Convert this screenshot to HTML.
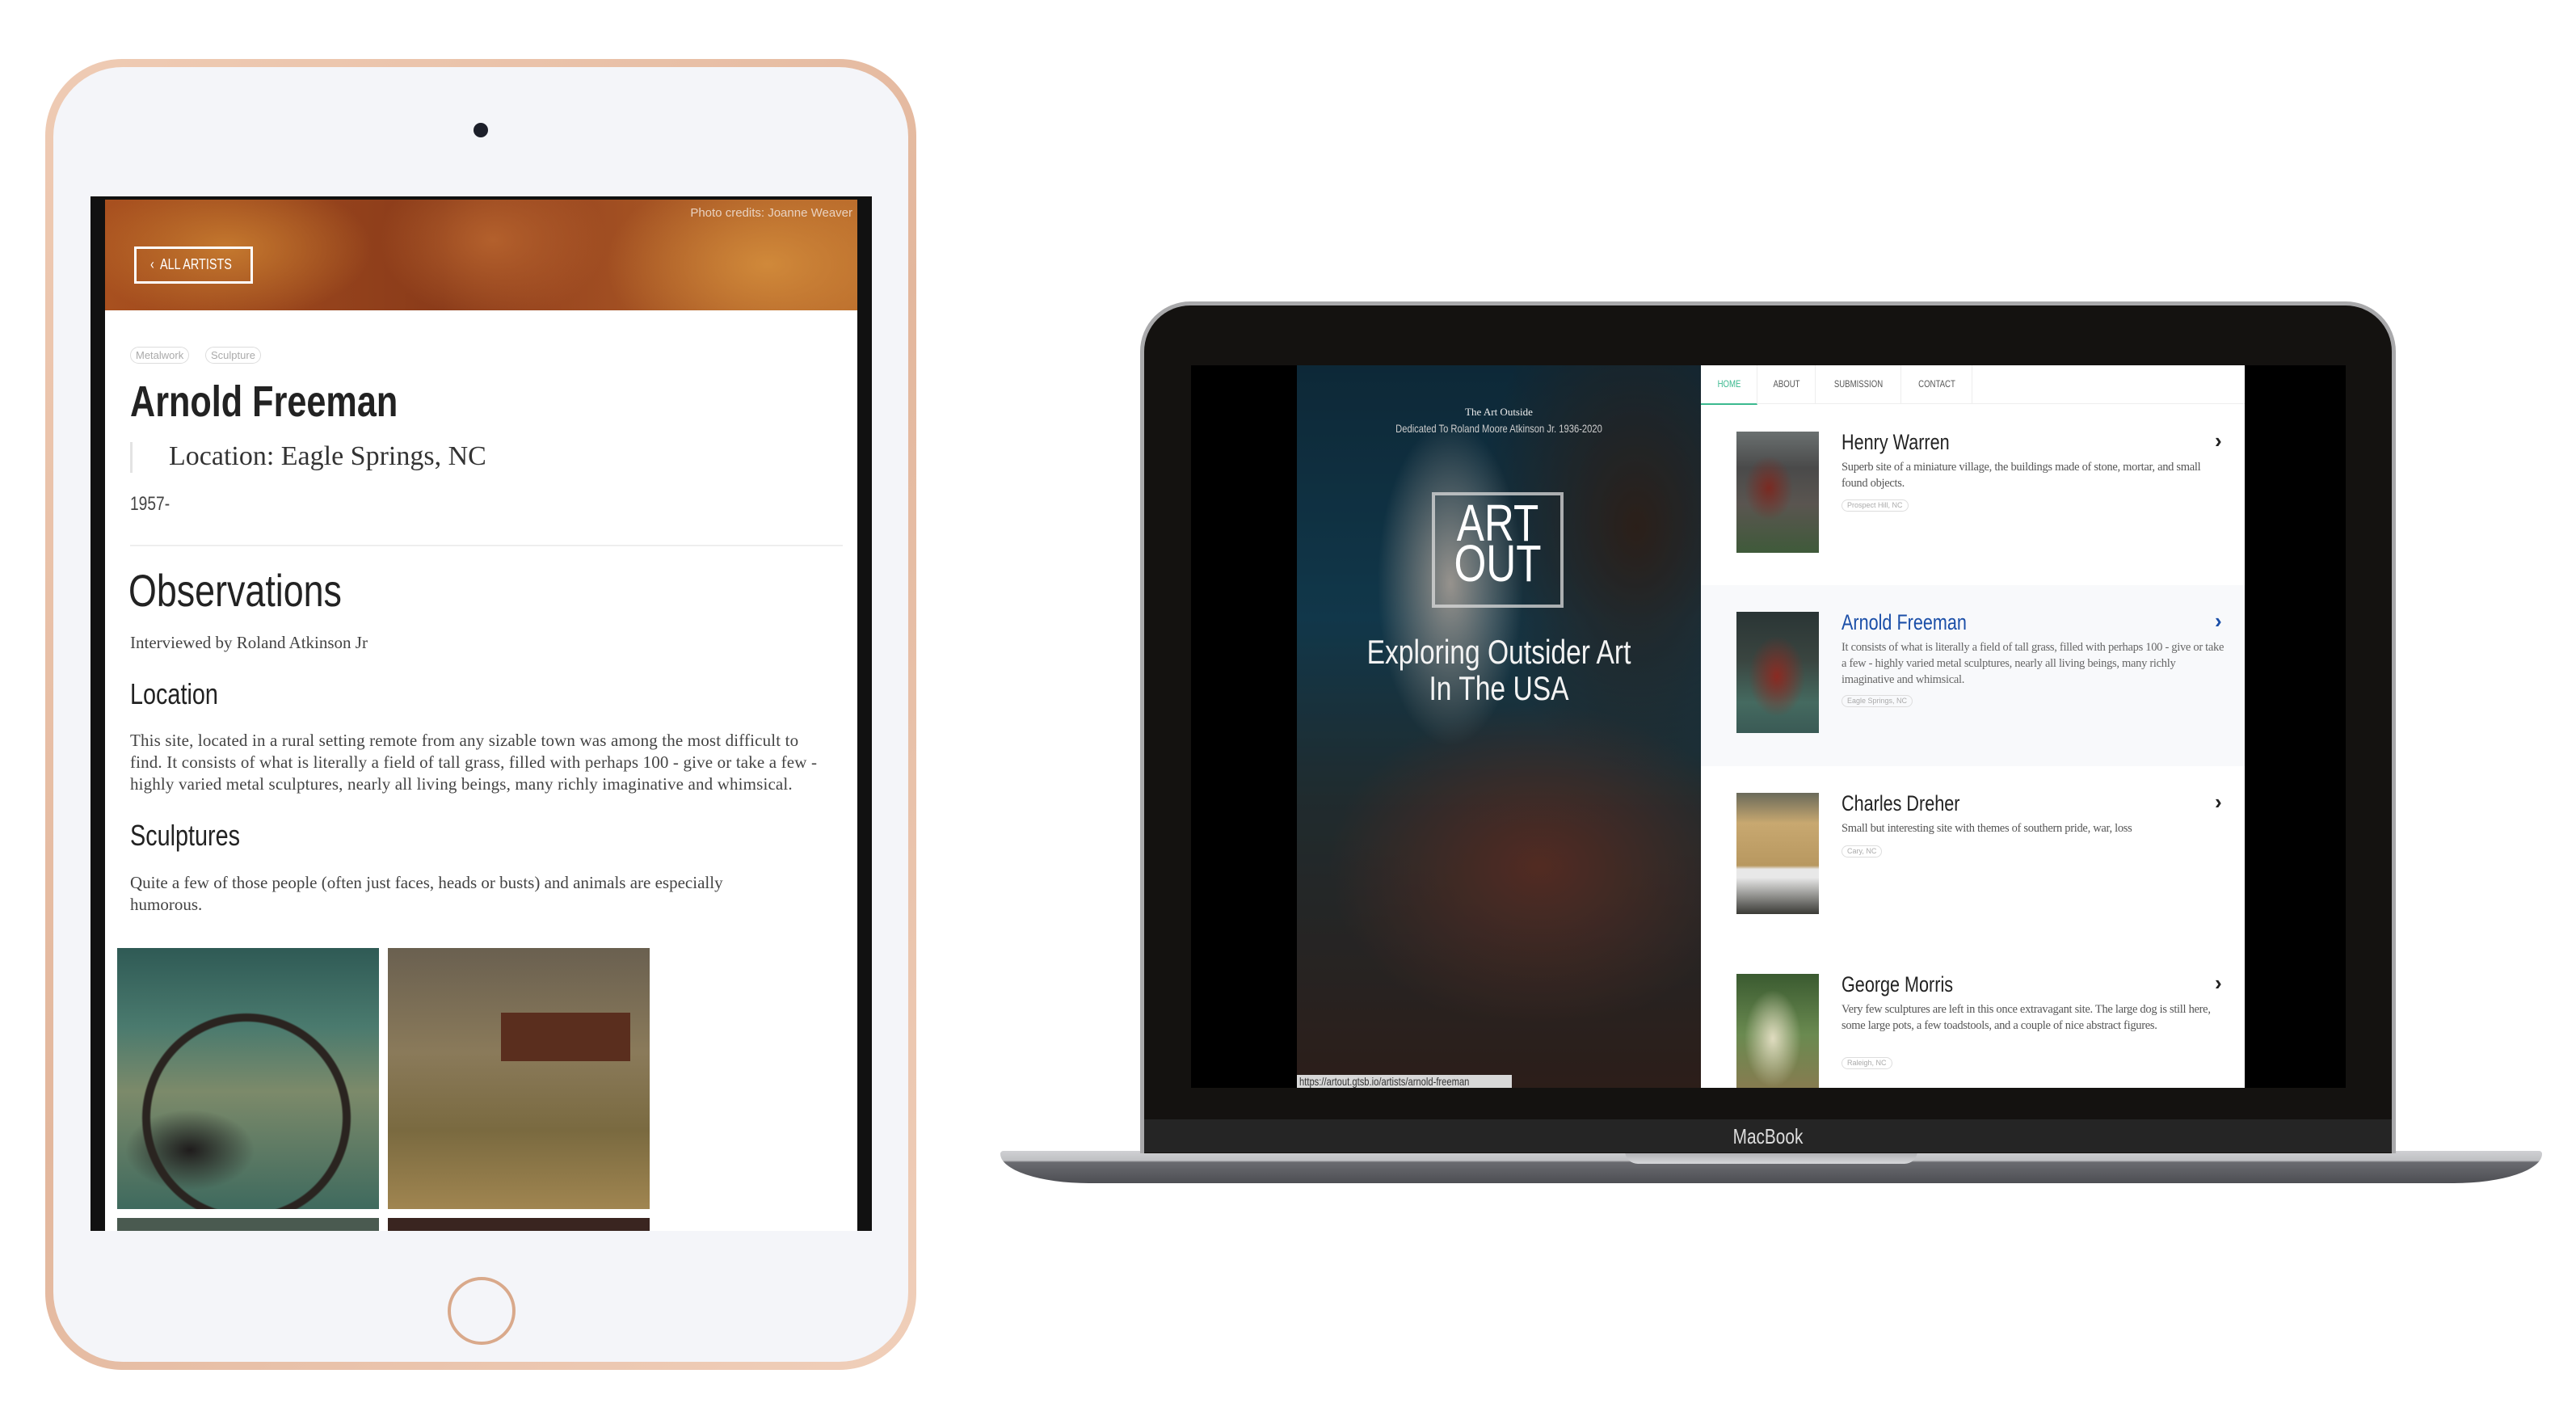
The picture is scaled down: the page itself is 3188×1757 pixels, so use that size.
<!DOCTYPE html>
<html><head><meta charset="utf-8"><style>
*{margin:0;padding:0;box-sizing:border-box}
body{width:3188px;height:1757px;background:#fff;position:relative;overflow:hidden;font-family:"Liberation Sans",sans-serif}
.a{position:absolute;white-space:nowrap}
.w{white-space:normal}
.n{transform:scaleX(.8);transform-origin:left top}
.nc{transform:scaleX(.8);transform-origin:center top}
.ser{font-family:"Liberation Serif",serif}
.pill{position:absolute;white-space:nowrap;border:1.5px solid #ddd;border-radius:12px;color:#aaa;padding:0 6px}
</style></head><body>

<!-- iPad -->
<div class="a" style="left:56px;top:73px;width:1078px;height:1622px;border-radius:95px;background:linear-gradient(135deg,#efcbb4,#e3b79d 50%,#f0cfba);"></div>
<div class="a" style="left:66px;top:83px;width:1058px;height:1602px;border-radius:86px;background:#f4f5f9;"></div>
<div class="a" style="left:586px;top:152px;width:18px;height:18px;border-radius:50%;background:#1c1f2a;"></div>
<div class="a" style="left:554px;top:1580px;width:84px;height:84px;border-radius:50%;border:4px solid #d9a98b;"></div>

<div class="a" style="left:112px;top:243px;width:967px;height:1280px;background:#111;"></div>
<div class="a" style="left:130px;top:247px;width:931px;height:1276px;background:#fff;overflow:hidden;">
  <div class="a" style="left:0;top:0;width:931px;height:137px;background:radial-gradient(ellipse 180px 90px at 150px 60px,#c4782e,transparent),radial-gradient(ellipse 200px 120px at 820px 80px,#d0893a,transparent),radial-gradient(ellipse 140px 100px at 480px 50px,#b3602c,transparent),linear-gradient(90deg,#a8501f,#8a3b1a 45%,#9b4820 60%,#b8692a);"></div>
  <div class="a" style="right:6px;top:8px;font-size:15px;color:#e9d2c0;">Photo credits: Joanne Weaver</div>
  <div class="a" style="left:36px;top:58px;width:147px;height:46px;border:3px solid #fff;"></div>
  <div class="a n" style="left:56px;top:70px;color:#fff;font-size:18px;">‹&nbsp; ALL ARTISTS</div>

  <div class="pill" style="left:31px;top:182px;font-size:13px;line-height:19px;">Metalwork</div>
  <div class="pill" style="left:124px;top:182px;font-size:13px;line-height:19px;">Sculpture</div>
  <div class="a n" style="left:31px;top:220px;font-size:54px;font-weight:bold;color:#222;line-height:60px;">Arnold Freeman</div>
  <div class="a" style="left:31px;top:300px;width:3px;height:38px;background:#e3e3e3;"></div>
  <div class="a ser" style="left:79px;top:298px;font-size:34px;color:#333;line-height:40px;">Location: Eagle Springs, NC</div>
  <div class="a n" style="left:31px;top:363px;font-size:24px;color:#444;">1957-</div>
  <div class="a" style="left:31px;top:427px;width:882px;height:2px;background:#eee;"></div>
  <div class="a n" style="left:29px;top:454px;font-size:56px;color:#222;line-height:60px;">Observations</div>
  <div class="a ser" style="left:31px;top:536px;font-size:21px;color:#444;">Interviewed by Roland Atkinson Jr</div>
  <div class="a n" style="left:31px;top:592px;font-size:36px;color:#222;line-height:40px;">Location</div>
  <div class="a ser w" style="left:31px;top:656px;width:868px;font-size:21px;color:#444;line-height:27px;letter-spacing:.15px;">This site, located in a rural setting remote from any sizable town was among the most difficult to find. It consists of what is literally a field of tall grass, filled with perhaps 100 - give or take a few - highly varied metal sculptures, nearly all living beings, many richly imaginative and whimsical.</div>
  <div class="a n" style="left:31px;top:767px;font-size:36px;color:#222;line-height:40px;">Sculptures</div>
  <div class="a ser w" style="left:31px;top:832px;width:810px;font-size:21px;color:#444;line-height:27px;">Quite a few of those people (often just faces, heads or busts) and animals are especially humorous.</div>
  <div class="a" style="left:15px;top:926px;width:324px;height:323px;background:radial-gradient(circle 130px at 160px 210px,transparent 118px,#2a2420 120px,#2a2420 128px,transparent 130px),radial-gradient(ellipse 80px 50px at 90px 250px,#1f1c1c,transparent),linear-gradient(180deg,#2f5a55,#4a7a6e 30%,#7c8a6a 55%,#3f6a5e);"></div>
  <div class="a" style="left:350px;top:926px;width:324px;height:323px;background:linear-gradient(90deg,transparent 140px,#5a2e1e 140px,#5a2e1e 300px,transparent 300px) 0 80px/100% 60px no-repeat,linear-gradient(180deg,#6a6050,#8a7a5a 40%,#7a6a40 70%,#a08550);"></div>
  <div class="a" style="left:15px;top:1260px;width:324px;height:20px;background:#4a5a50;"></div>
  <div class="a" style="left:350px;top:1260px;width:324px;height:20px;background:#3a2520;"></div>
</div>

<!-- MacBook -->
<div class="a" style="left:1238px;top:1424px;width:1908px;height:40px;border-radius:4px 4px 120px 120px/4px 4px 40px 40px;background:linear-gradient(180deg,#cfd0d3 0,#bfc0c3 12px,#6a6b70 14px,#4d4e53 100%);"></div>
<div class="a" style="left:2011px;top:1424px;width:362px;height:16px;border-radius:0 0 30px 30px;background:linear-gradient(180deg,#a9aaad,#d6d7da);"></div>
<div class="a" style="left:1411px;top:373px;width:1554px;height:1054px;border-radius:62px 62px 0 0;background:#a9a9ab;"></div>
<div class="a" style="left:1416px;top:378px;width:1544px;height:1049px;border-radius:57px 57px 0 0;background:#141210;"></div>
<div class="a" style="left:1416px;top:1385px;width:1544px;height:41px;background:#252525;"></div>
<div class="a nc" style="left:2088px;top:1391px;width:200px;text-align:center;font-size:26px;color:#ddd;">MacBook</div>
<div class="a" style="left:1474px;top:452px;width:1429px;height:894px;background:#000;"></div>

<!-- hero -->
<div class="a" style="left:1605px;top:452px;width:500px;height:894px;overflow:hidden;background:radial-gradient(ellipse 90px 200px at 190px 270px,#c9c4bd,transparent),radial-gradient(ellipse 260px 200px at 300px 620px,#6e3a2e,transparent),radial-gradient(ellipse 200px 300px at 420px 200px,#3a2a22,transparent),linear-gradient(180deg,#12364a 0,#174a63 35%,#2b3a3e 60%,#3b2822 100%);">
  <div class="a" style="left:0;top:0;width:100%;height:100%;background:rgba(0,0,0,.25)"></div>
  <div class="a ser" style="left:0;top:50px;width:100%;text-align:center;font-size:13px;color:#eee;">The Art Outside</div>
  <div class="a nc" style="left:0;top:70px;width:100%;text-align:center;font-size:14px;color:#ccc;">Dedicated To Roland Moore Atkinson Jr. 1936-2020</div>
  <div class="a" style="left:167px;top:157px;width:163px;height:143px;border:4px solid rgba(220,220,220,.75);"></div>
  <div class="a nc" style="left:167px;top:170px;width:163px;text-align:center;font-size:64px;color:#fff;line-height:50px;">ART<br>OUT</div>
  <div class="a nc" style="left:0;top:332px;width:100%;text-align:center;font-size:42px;color:#f3f3f3;line-height:45px;">Exploring Outsider Art<br>In The USA</div>
  <div class="a" style="left:0;bottom:0;width:266px;height:16px;background:#d8d8d8;"></div>
  <div class="a n" style="left:3px;bottom:0;color:#333;font-size:14px;line-height:16px;">https://artout.gtsb.io/artists/arnold-freeman</div>
</div>

<!-- panel -->
<div class="a" style="left:2105px;top:452px;width:673px;height:894px;background:#fff;overflow:hidden;">
  <div class="a" style="left:0;top:0;width:100%;height:48px;border-bottom:1px solid #eee;"></div>
  <div class="a" style="left:0;top:0;width:70px;height:49px;border-bottom:2px solid #3bb98f;border-right:1px solid #eee;"></div>
  <div class="a nc" style="left:0;top:16px;width:70px;color:#3bb98f;font-size:12px;text-align:center;">HOME</div>
  <div class="a" style="left:70px;top:0;width:72px;height:48px;border-right:1px solid #eee;"></div>
  <div class="a nc" style="left:70px;top:16px;width:72px;color:#555;font-size:12px;text-align:center;">ABOUT</div>
  <div class="a" style="left:142px;top:0;width:106px;height:48px;border-right:1px solid #eee;"></div>
  <div class="a nc" style="left:142px;top:16px;width:106px;color:#555;font-size:12px;text-align:center;">SUBMISSION</div>
  <div class="a" style="left:248px;top:0;width:88px;height:48px;border-right:1px solid #eee;"></div>
  <div class="a nc" style="left:248px;top:16px;width:88px;color:#555;font-size:12px;text-align:center;">CONTACT</div>

  <div class="a" style="left:0;top:272px;width:100%;height:224px;background:#f8f9fb;"></div>

  <div class="a" style="left:44px;top:82px;width:102px;height:150px;background:radial-gradient(ellipse 30px 40px at 40px 70px,#7a2a22,transparent),linear-gradient(180deg,#6a7070,#4a4a4a 30%,#5a5550 60%,#3f5a3a);"></div>
  <div class="a n" style="left:174px;top:80px;font-size:27px;color:#222;">Henry Warren</div>
  <div class="a" style="left:636px;top:78px;font-size:26px;color:#222;font-weight:bold;">›</div>
  <div class="a ser w" style="left:174px;top:116px;width:465px;font-size:14.5px;color:#555;line-height:20px;letter-spacing:-.3px;">Superb site of a miniature village, the buildings made of stone, mortar, and small found objects.</div>
  <div class="pill" style="left:174px;top:166px;font-size:9px;line-height:13px;">Prospect Hill, NC</div>

  <div class="a" style="left:44px;top:305px;width:102px;height:150px;background:radial-gradient(ellipse 35px 50px at 50px 80px,#8a2a22,transparent),linear-gradient(180deg,#2a3535,#3a4540 40%,#456a60 75%,#3a5a55);"></div>
  <div class="a n" style="left:174px;top:303px;font-size:27px;color:#1b4fa8;">Arnold Freeman</div>
  <div class="a" style="left:636px;top:301px;font-size:26px;color:#1b4fa8;font-weight:bold;">›</div>
  <div class="a ser w" style="left:174px;top:339px;width:475px;font-size:14.5px;color:#666;line-height:20px;letter-spacing:-.3px;">It consists of what is literally a field of tall grass, filled with perhaps 100 - give or take a few - highly varied metal sculptures, nearly all living beings, many richly imaginative and whimsical.</div>
  <div class="pill" style="left:174px;top:408px;font-size:9px;line-height:13px;">Eagle Springs, NC</div>

  <div class="a" style="left:44px;top:529px;width:102px;height:150px;background:linear-gradient(180deg,#6a6a5a,#c8a870 25%,#b89860 60%,#e8e8e8 63%,#e8e8e8 70%,#3a3a35);"></div>
  <div class="a n" style="left:174px;top:527px;font-size:27px;color:#222;">Charles Dreher</div>
  <div class="a" style="left:636px;top:525px;font-size:26px;color:#222;font-weight:bold;">›</div>
  <div class="a ser w" style="left:174px;top:563px;width:465px;font-size:14.5px;color:#555;line-height:20px;letter-spacing:-.3px;">Small but interesting site with themes of southern pride, war, loss</div>
  <div class="pill" style="left:174px;top:594px;font-size:9px;line-height:13px;">Cary, NC</div>

  <div class="a" style="left:44px;top:753px;width:102px;height:150px;background:radial-gradient(ellipse 35px 60px at 45px 80px,#e0dcc0,transparent),linear-gradient(180deg,#3a5a30,#6a8a50 50%,#8a7a50);"></div>
  <div class="a n" style="left:174px;top:751px;font-size:27px;color:#222;">George Morris</div>
  <div class="a" style="left:636px;top:749px;font-size:26px;color:#222;font-weight:bold;">›</div>
  <div class="a ser w" style="left:174px;top:787px;width:475px;font-size:14.5px;color:#555;line-height:20px;letter-spacing:-.3px;">Very few sculptures are left in this once extravagant site. The large dog is still here, some large pots, a few toadstools, and a couple of nice abstract figures.</div>
  <div class="pill" style="left:174px;top:856px;font-size:9px;line-height:13px;">Raleigh, NC</div>
</div>

</body></html>
